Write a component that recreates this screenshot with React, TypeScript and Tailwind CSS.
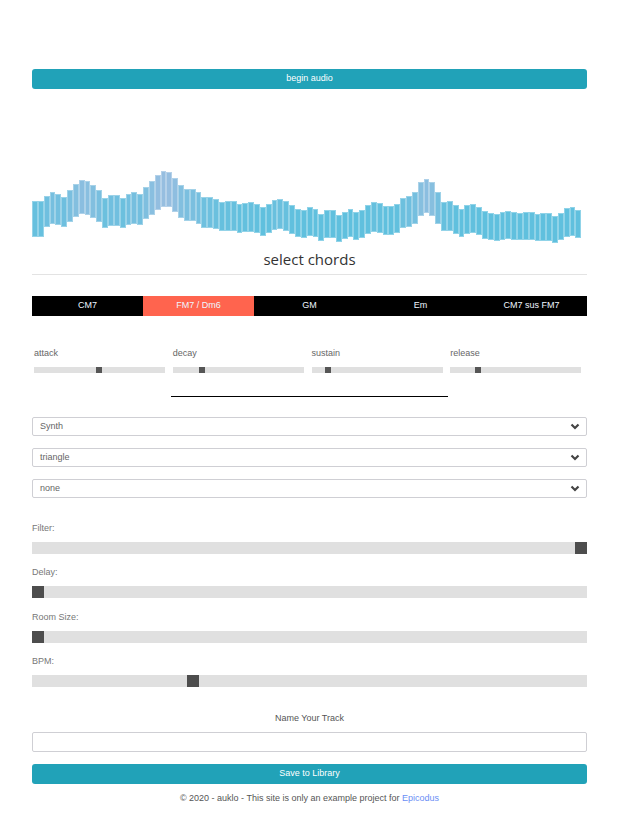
import React from "react";

// wave bar tops (px, page coords) read off the visualiser
const tops: number[] = [
  201, 201, 196, 192, 194, 196.7, 189.7, 184, 180, 181, 185, 190, 197.7, 195, 195, 198, 193.7, 192, 194, 186.7,
  181, 175, 170.7, 171.7, 178, 185, 189, 189, 192, 197, 197, 198.7, 201.7, 201, 201, 204, 203, 202, 204, 207,
  203.7, 199.7, 198.7, 201, 204.7, 209, 209.7, 207, 208.7,
  213.7, 210, 210, 214.7, 211.7, 209.3, 212, 210.3, 205.3, 202.3, 203.3, 205.7, 206, 203.7, 198, 196.3, 192.3,
  182.3, 179.3, 182, 192.3, 201.7, 201, 205, 209, 205, 203.7, 206.7, 211.3, 212.7, 214, 212, 211, 212, 213, 212,
  212.3, 214, 213.3, 213.3, 215.7, 212.7, 208.3, 207, 209.7,
];

const WAVE_TOP = 168;

function barColor(top: number) {
  const t = Math.max(0, Math.min(1, (205 - top) / 32));
  const r = Math.round(96 + (150 - 96) * t);
  const g = Math.round(192 + (190 - 192) * t);
  const b = Math.round(222 + (224 - 222) * t);
  return `rgb(${r},${g},${b})`;
}

function Wave() {
  return (
    <div className="flex items-start w-[550px] h-[74px] mt-[79px]">
      {tops.map((top, i) => {
        const bottom = i < 2 ? 236.5 : 0.8 * top + 70;
        return (
          <div
            key={i}
            className="flex-1 border border-white/30"
            style={{ marginTop: top - WAVE_TOP, height: bottom - top, backgroundColor: barColor(top) }}
          />
        );
      })}
    </div>
  );
}

function Chevron() {
  return (
    <svg width="10" height="7" viewBox="0 0 10 7" className="mr-[6px]">
      <polyline points="1.5,1.5 5,5 8.5,1.5" fill="none" stroke="#444" strokeWidth="2.2" />
    </svg>
  );
}

function Select({ value }: { value: string }) {
  return (
    <div className="flex items-center justify-between h-[19px] border border-[#cfcfd4] rounded-[2px] pl-[7px] text-[9px] text-[#666]">
      <span>{value}</span>
      <Chevron />
    </div>
  );
}

function SmallSlider({ label, pos }: { label: string; pos: number }) {
  return (
    <div className="pl-[2px]">
      <div className="text-[9px] leading-[12px] text-[#666]">{label}</div>
      <div className="relative mt-[8px] w-[131px] h-[6px] bg-[#e0e0e0]">
        <div className="absolute top-0 h-[6px] w-[6px] bg-[#555]" style={{ left: pos }} />
      </div>
    </div>
  );
}

function BigSlider({ label, pos, gap }: { label: string; pos: number; gap: string }) {
  return (
    <div className={gap}>
      <div className="text-[9px] leading-[12px] text-[#777]">{label}</div>
      <div className="relative mt-[8px] h-[12px] bg-[#e0e0e0]">
        <div className="absolute top-0 h-[12px] w-[12px] bg-[#4d4d4d]" style={{ left: pos * (555 - 12) }} />
      </div>
    </div>
  );
}

const chords = ["CM7", "FM7 / Dm6", "GM", "Em", "CM7 sus FM7"];

export default function App() {
  return (
    <div className="w-[623px] min-h-[830px] bg-white" style={{ fontFamily: '"Liberation Sans", Arial, sans-serif' }}>
      <div className="ml-[32px] w-[555px] pt-[69px]">
        <button className="block w-full h-[20px] rounded-[3px] bg-[#21a2b8] text-white text-[9px]">begin audio</button>

        <Wave />

        <div
          className="mt-[7px] text-center text-[15px] leading-[20px] text-[#333]"
          style={{ fontFamily: '"Open Sans", sans-serif' }}
        >
          select chords
        </div>
        <div className="mt-[5px] border-t border-[#e3e3e3]" />

        <div className="mt-[21px] grid grid-cols-5 h-[20px] bg-black">
          {chords.map((c, i) => (
            <div
              key={c}
              className={`flex items-center justify-center text-[9px] text-[#eef6ff] ${i === 1 ? "bg-[#ff644e]" : ""}`}
            >
              {c}
            </div>
          ))}
        </div>

        <div className="mt-[31px] grid grid-cols-4">
          <SmallSlider label="attack" pos={62} />
          <SmallSlider label="decay" pos={26} />
          <SmallSlider label="sustain" pos={13} />
          <SmallSlider label="release" pos={25} />
        </div>

        <div className="mt-[23px] mx-auto w-[277px] h-px bg-black" />

        <div className="mt-[20px] flex flex-col gap-[12px]">
          <Select value="Synth" />
          <Select value="triangle" />
          <Select value="none" />
        </div>

        <BigSlider label="Filter:" pos={1} gap="mt-[24px]" />
        <BigSlider label="Delay:" pos={0} gap="mt-[12px]" />
        <BigSlider label="Room Size:" pos={0} gap="mt-[13px]" />
        <BigSlider label="BPM:" pos={0.285} gap="mt-[12px]" />

        <div className="mt-[25px] text-center text-[9px] leading-[12px] text-[#555]">Name Your Track</div>
        <input className="mt-[8px] block w-full h-[20px] border border-[#cfcfd4] rounded-[2px] outline-none" />
        <button className="block mt-[12px] w-full h-[20px] rounded-[3px] bg-[#21a2b8] text-white text-[9px]">
          Save to Library
        </button>
        <div className="mt-[8px] text-center text-[9px] leading-[12px] text-[#555]">
          © 2020 - auklo - This site is only an example project for <span className="text-[#6a8ef5]">Epicodus</span>
        </div>
      </div>
    </div>
  );
}
